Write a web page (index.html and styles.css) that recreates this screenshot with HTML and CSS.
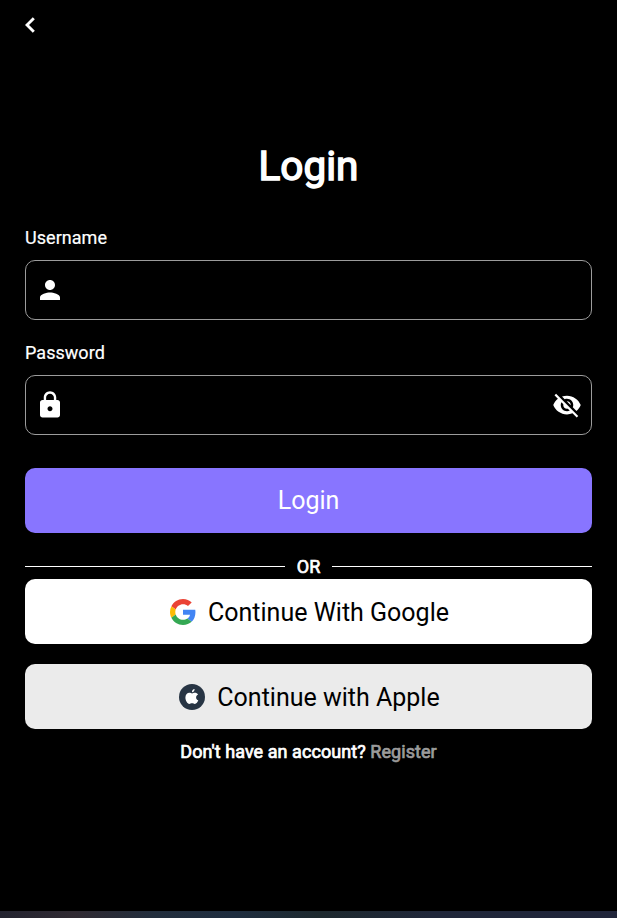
FILE: index.html
```html
<!DOCTYPE html>
<html lang="en">
<head>
<meta charset="utf-8">
<title>Login</title>
<link rel="stylesheet" href="styles.css">
</head>
<body>
<main class="screen">
  <header class="topbar">
    <svg class="back" viewBox="0 0 10 16"><path d="M8.8 1.2 2 8l6.8 6.8" fill="none" stroke="#fff" stroke-width="2.9"/></svg>
  </header>
  <h1 class="title"><span>Login</span></h1>
  <label class="label"><span>Username</span></label>
  <div class="field">
    <svg class="icon" viewBox="0 0 24 24"><path fill="#fff" d="M12 12c2.21 0 4-1.79 4-4s-1.79-4-4-4-4 1.79-4 4 1.79 4 4 4zm0 2c-2.67 0-8 1.34-8 4v2h16v-2c0-2.66-5.33-4-8-4z"/></svg>
  </div>
  <label class="label"><span>Password</span></label>
  <div class="field">
    <svg class="icon" viewBox="0 0 24 24"><path fill="#fff" d="M18 8h-1V6c0-2.76-2.24-5-5-5S7 3.24 7 6v2H6c-1.1 0-2 .9-2 2v10c0 1.1.9 2 2 2h12c1.1 0 2-.9 2-2V10c0-1.1-.9-2-2-2zm-6 9c-1.1 0-2-.9-2-2s.9-2 2-2 2 .9 2 2-.9 2-2 2zm3.1-9H8.9V6c0-1.71 1.39-3.1 3.1-3.1 1.71 0 3.1 1.39 3.1 3.1v2z"/></svg>
    <svg class="icon" viewBox="0 0 24 24"><path fill="#fff" d="M12 7c2.76 0 5 2.24 5 5 0 .65-.13 1.26-.36 1.83l2.92 2.92c1.51-1.26 2.7-2.89 3.43-4.75-1.73-4.39-6-7.5-11-7.5-1.4 0-2.74.25-3.98.7l2.16 2.16C10.74 7.13 11.35 7 12 7zM2 4.27l2.28 2.28.46.46C3.08 8.3 1.78 10.02 1 12c1.73 4.39 6 7.5 11 7.5 1.55 0 3.03-.3 4.38-.84l.42.42L19.73 22 21 20.73 3.27 3 2 4.27zM7.53 9.8l1.55 1.55c-.05.21-.08.43-.08.65 0 1.66 1.34 3 3 3 .22 0 .44-.03.65-.08l1.55 1.55c-.67.33-1.41.53-2.2.53-2.76 0-5-2.24-5-5 0-.79.2-1.53.53-2.2zm4.31-.78 3.15 3.15.02-.16c0-1.66-1.34-3-3-3l-.17.01z"/></svg>
  </div>
  <button class="btn primary"><span>Login</span></button>
  <div class="divider"><span class="or">OR</span></div>
  <button class="btn google">
    <svg class="logo" viewBox="0 0 48 48"><path fill="#EA4335" d="M24 9.5c3.54 0 6.71 1.22 9.21 3.6l6.85-6.85C35.9 2.38 30.47 0 24 0 14.62 0 6.51 5.38 2.56 13.22l7.98 6.19C12.43 13.72 17.74 9.5 24 9.5z"/><path fill="#4285F4" d="M46.98 24.55c0-1.57-.15-3.09-.38-4.55H24v9.02h12.94c-.58 2.96-2.26 5.48-4.78 7.18l7.73 6c4.51-4.18 7.09-10.36 7.09-17.65z"/><path fill="#FBBC05" d="M10.53 28.59A14.5 14.5 0 0 1 9.77 24c0-1.6.27-3.14.76-4.59l-7.98-6.19A23.94 23.94 0 0 0 0 24c0 3.88.92 7.54 2.56 10.78l7.97-6.19z"/><path fill="#34A853" d="M24 48c6.48 0 11.93-2.13 15.89-5.81l-7.73-6c-2.15 1.45-4.92 2.3-8.16 2.3-6.26 0-11.57-4.22-13.47-9.91l-7.98 6.19C6.51 42.62 14.62 48 24 48z"/></svg>
    <span>Continue With Google</span>
  </button>
  <button class="btn apple">
    <svg class="logo" viewBox="0 0 26 26"><circle cx="13" cy="13" r="13" fill="#283544"/><path fill="#fff" d="M17.1 13.4c0-1.5.8-2.3 2-3-.8-1.1-1.9-1.6-3.2-1.6-1.2 0-2 .6-2.8.6s-1.5-.6-2.7-.6c-2.1 0-4 1.8-4 4.8 0 3.1 2 6.4 3.9 6.4 1 0 1.5-.7 2.8-.7s1.7.7 2.7.7c1.6 0 2.9-2 3.5-3.7-1.4-.6-2.2-1.6-2.2-2.9zM15.6 5.1c-1.6.2-2.8 1.6-2.6 3.2 1.5 0 2.7-1.5 2.6-3.2z"/></svg>
    <span>Continue with Apple</span>
  </button>
  <p class="signup"><span>Don't have an account?</span> <span class="register">Register</span></p>
</main>
<footer class="edge"></footer>
</body>
</html>
```
FILE: styles.css
```css
* { box-sizing: border-box; }
body {
  margin: 0;
  height: 918px;
  display: flex;
  flex-direction: column;
  overflow: hidden;
  background: #000;
  color: #fff;
  font-family: Roboto, sans-serif;
}
.screen {
  flex: 1;
  display: flex;
  flex-direction: column;
  padding: 0 25px;
}
.topbar { height: 50px; display: flex; align-items: center; }
.back { width: 10px; height: 16px; }
.title {
  margin: 91px 0 0;
  height: 50px;
  line-height: 50px;
  font-size: 40.5px;
  font-weight: 400;
  text-align: center;
  -webkit-text-stroke: 1.5px currentColor;
}
.label {
  margin-top: 34px;
  height: 26px;
  line-height: 26px;
  font-size: 18px;
  letter-spacing: 0.04px;
  -webkit-text-stroke: 0.2px currentColor;
}
.field {
  margin-top: 9px;
  height: 60px;
  border: 1px solid #9c9c9c;
  border-radius: 10px;
  display: flex;
  align-items: center;
  justify-content: space-between;
  padding: 0 9px;
}
.field + .label { margin-top: 20px; }
.icon { width: 30px; height: 30px; }
.btn {
  flex: none;
  height: 65px;
  border: 0;
  border-radius: 10px;
  padding: 2px 0 0;
  display: flex;
  align-items: center;
  justify-content: center;
  gap: 12px;
  font: 400 25px/30px Roboto, sans-serif;
  color: #000;
}
.primary { margin-top: 32.5px; background: #8875ff; color: #fff; }
.logo { width: 26px; height: 26px; }
.divider {
  height: 24px;
  margin-top: 22px;
  display: flex;
  align-items: center;
  gap: 12px;
}
.divider::before, .divider::after {
  content: "";
  flex: 1;
  height: 1.3px;
  background: #fff;
}
.or { font-size: 18px; line-height: 24px; -webkit-text-stroke: 0.7px currentColor; }
.google { padding: 3px 0 0 2px; background: #fff; }
.apple { padding: 3px 0 0 2px; margin-top: 20px; background: #ebebeb; }
.google .logo, .apple .logo { margin-bottom: 1px; }
.signup {
  margin: 11px 0 0;
  line-height: 24px;
  font-size: 18px;
  letter-spacing: 0.06px;
  text-align: center;
  -webkit-text-stroke: 0.7px currentColor;
}
.register { color: #9b9b9b; }
.edge {
  height: 7px;
  background: linear-gradient(90deg, #22232f 0%, #302a32 12%, #222e3d 25%, #1e2d3f 38%, #1d292e 52%, #20273a 70%, #20253a 100%);
}
```
